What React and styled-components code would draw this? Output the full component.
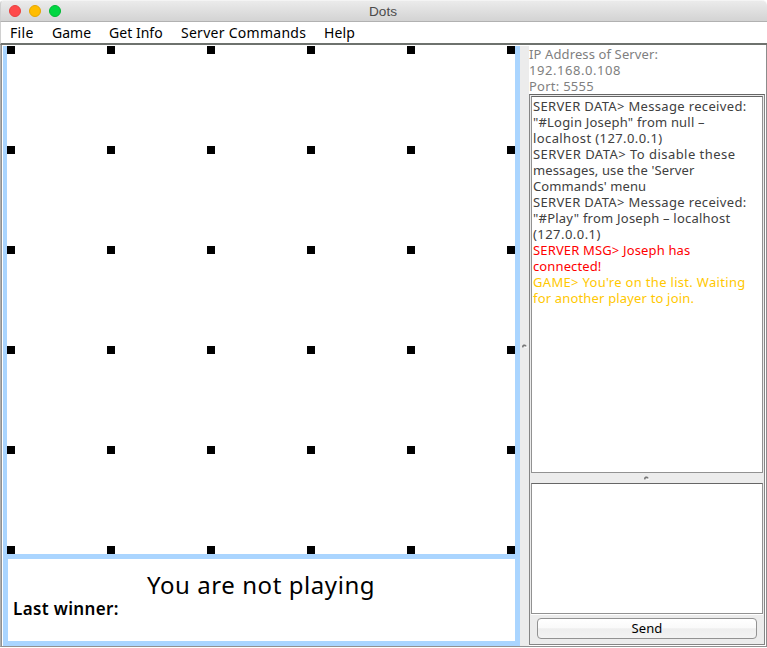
import React from "react";
import styled, { createGlobalStyle } from "styled-components";

const GlobalStyle = createGlobalStyle`
  * { box-sizing: border-box; }
  html, body { margin: 0; padding: 0; overflow: hidden; background: #fff; }
  body { font-family: "Noto Sans", "Open Sans", sans-serif; }
`;

const Window = styled.div`
  width: 767px;
  height: 648px;
  display: flex;
  flex-direction: column;
  background: #fff;
`;

const TitleBar = styled.header`
  height: 22px;
  flex: none;
  display: grid;
  grid-template-columns: 9px 100px 1fr 111px;
  align-items: center;
  border-bottom: 1px solid #b1b1b1;
  border-left: 1px solid #cfcfcf;
  border-top: 1px solid #f4f4f4;
  border-radius: 4px 5px 0 0;
  background: linear-gradient(#ebebeb, #d3d3d3);
`;

const Lights = styled.div`
  grid-column: 2;
  display: flex;
  gap: 8px;
  margin-left: -1px;
`;

const Light = styled.span`
  width: 12px;
  height: 12px;
  border-radius: 50%;
  background: ${(p) => p.$fill};
  border: 1px solid ${(p) => p.$edge};
`;

const Title = styled.h1`
  margin: 0;
  padding-top: 2px;
  text-align: center;
  font: 400 13.6px/18px "Liberation Sans", sans-serif;
  color: #4b4b4b;
`;

const MenuBar = styled.nav`
  height: 23px;
  flex: none;
  display: flex;
  padding-left: 10px;
  border-left: 1px solid #d0d0d0;
  border-bottom: 2px solid #6e726e;
`;

const MenuItem = styled.span`
  width: ${(p) => p.$width}px;
  margin-left: -1px;
  margin-right: 1px;
  font-size: 14px;
  line-height: 22px;
  letter-spacing: ${(p) => p.$track}px;
  color: #000;
  white-space: nowrap;
`;

const Body = styled.main`
  height: 602px;
  flex: none;
  display: grid;
  grid-template-columns: 517px 9px 236px 1fr;
  border-left: 1px solid #b0b0b0;
  border-right: 1px solid #8c8c8c;
  border-bottom: 1px solid #919191;
  box-shadow: inset 1px 0 #8f8f8f;
  padding-left: 2px;
  padding-top: 1px;
`;

const GamePane = styled.section`
  display: flex;
  flex-direction: column;
  background: #aad5ff;
`;

const Board = styled.div`
  height: 508px;
  width: 508px;
  margin-left: 4px;
  background: #fff;
  display: grid;
  grid-template-columns: repeat(6, 8px);
  grid-template-rows: repeat(6, 8px);
  justify-content: space-between;
  align-content: space-between;
`;

const Dot = styled.i`
  background: #000;
`;

const Status = styled.div`
  width: 507px;
  height: 82px;
  margin: 5px 0 0 5px;
  background: #fff;
  color: #000;
  padding: 10px 5px 0;
`;

const Turn = styled.div`
  font-size: 24px;
  line-height: 32px;
  height: 30px;
  padding-left: 134px;
  letter-spacing: ${(p) => p.$track}px;
  white-space: nowrap;
`;

const Winner = styled.div`
  font-size: 17px;
  font-weight: 600;
  line-height: 19px;
  letter-spacing: ${(p) => p.$track}px;
`;

const Divider = styled.div`
  background: #ececec;
  display: flex;
  align-items: center;
  justify-content: center;
  height: ${(p) => (p.$row ? "10px" : "auto")};
`;

const Side = styled.aside`
  display: flex;
  flex-direction: column;
`;

const Address = styled.div`
  height: 48px;
  flex: none;
  color: #808080;
`;

const Line = styled.div`
  height: 16px;
  line-height: 16px;
  font-size: 13px;
  white-space: pre;
  letter-spacing: ${(p) => p.$track}px;
  color: ${(p) => p.$color || "inherit"};
`;

const Frame = styled.div`
  height: 551px;
  border: 1px solid #858585;
  border-top-color: #666;
  padding: 1px;
  background: #ececec;
  display: flex;
  flex-direction: column;
`;

const Log = styled.div`
  height: 377px;
  flex: none;
  border: 1px solid #929292;
  border-top-color: #666;
  padding: 1px 0 0 1px;
  color: #404040;
  background: #fff;
`;

const Entry = styled.div`
  height: 131px;
  flex: none;
  border: 1px solid #929292;
  border-top-color: #666;
  background: #fff;
`;

const Actions = styled.div`
  flex: 1;
  background: #ececec;
  border-top: 1px solid #fff;
  padding: 3px 5px 0 6px;
  display: flex;
`;

const Button = styled.button`
  width: 220px;
  height: 21px;
  padding: 0;
  border: 1px solid #929292;
  border-radius: 4px;
  background: linear-gradient(#fff 0%, #fafafa 45%, #eee 52%, #f3f3f3 100%);
  font: 13px/17px "Noto Sans", sans-serif;
  letter-spacing: 0.1px;
  color: #000;
`;

const Arrow = () => (
  <svg width="6" height="4" viewBox="0 0 6 4">
    <path d="M0 2.5C.5 .2 3.8 -.2 4.8 2.5H3L2 2.1 1.3 3.6H.3Z" fill="#777" />
    <path d="M2.5 3.4H5V2" stroke="#fff" strokeWidth=".7" fill="none" />
  </svg>
);

const menus = [
  ["File", 42, 0.3],
  ["Game", 57, 0],
  ["Get Info", 72, 0.03],
  ["Server Commands", 143, 0.27],
  ["Help", 50, 0.1],
];

const address = [
  ["IP Address of Server:", 0.12],
  ["192.168.0.108", 0.55],
  ["Port: 5555", 0.25],
];

const log = [
  ["SERVER DATA> Message received:", 0.34],
  ['"#Login Joseph" from null –', 0.2],
  ["localhost (127.0.0.1)", 0.4],
  ["SERVER DATA> To disable these", 0.46],
  ["messages, use the 'Server", 0.13],
  ["Commands' menu", 0.1],
  ["SERVER DATA> Message received:", 0.34],
  ['"#Play" from Joseph – localhost', 0.23],
  ["(127.0.0.1)", 0.45],
  ["SERVER MSG> Joseph has", 0.15, "#f00"],
  ["connected!", 0.12, "#f00"],
  ["GAME> You're on the list. Waiting", 0.31, "#ffc800"],
  ["for another player to join.", 0.17, "#ffc800"],
];

export default function App() {
  return (
    <>
      <GlobalStyle />
      <Window>
        <TitleBar>
          <Lights>
            <Light $fill="#ff4a4b" $edge="#e8403f" />
            <Light $fill="#ffbd00" $edge="#e5a600" />
            <Light $fill="#00d742" $edge="#00b834" />
          </Lights>
          <Title>Dots</Title>
        </TitleBar>
        <MenuBar>
          {menus.map(([label, width, track]) => (
            <MenuItem key={label} $width={width} $track={track}>{label}</MenuItem>
          ))}
        </MenuBar>
        <Body>
          <GamePane>
            <Board>
              {Array.from({ length: 36 }, (_, i) => <Dot key={i} />)}
            </Board>
            <Status>
              <Turn $track={0.57}>You are not playing</Turn>
              <Winner $track={0.35}>Last winner:</Winner>
            </Status>
          </GamePane>
          <Divider><Arrow /></Divider>
          <Side>
            <Address>
              {address.map(([text, track]) => (
                <Line key={text} $track={track}>{text}</Line>
              ))}
            </Address>
            <Frame>
              <Log>
                {log.map(([text, track, color], i) => (
                  <Line key={i} $track={track} $color={color}>{text}</Line>
                ))}
              </Log>
              <Divider $row><Arrow /></Divider>
              <Entry />
              <Actions><Button>Send</Button></Actions>
            </Frame>
          </Side>
        </Body>
      </Window>
    </>
  );
}
